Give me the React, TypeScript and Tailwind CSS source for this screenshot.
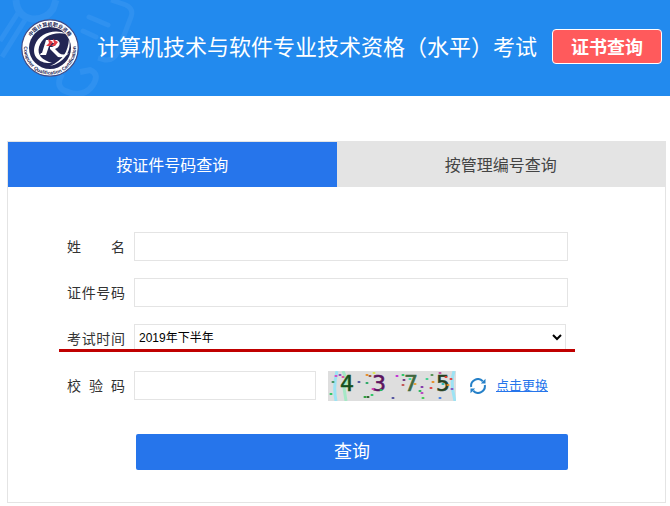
import { useState } from "react";

const specks: [number, number, string][] = [
  [8, 5, "#d946c4"], [12, 4, "#7c4fc0"], [15, 6, "#e0529c"], [5, 11, "#3f8f5b"], [3, 23, "#22c55e"],
  [31, 11, "#4b4b9b"], [39, 4, "#e8891c"], [42, 5, "#a0522d"], [46, 2, "#d9e84a"],
  [39, 12, "#22a55e"], [37, 26, "#1f9d2f"], [40, 26, "#245c24"], [44, 24, "#22c55e"], [45, 18, "#d63ab0"],
  [53, 19, "#22c55e"], [69, 5, "#c026d3"], [75, 4, "#22c55e"], [76, 9, "#6b2a7a"], [75, 14, "#c04a4a"],
  [82, 8, "#35e0a0"], [87, 13, "#e89a2c"], [94, 16, "#7c2da8"], [92, 20, "#22b455"], [94, 22, "#b63ac0"],
  [99, 8, "#35d08a"], [103, 17, "#e03a3a"], [105, 11, "#e8891c"], [104, 4, "#4b8f4b"], [112, 2, "#c04a9c"],
  [118, 6, "#e03a2a"], [123, 8, "#e03a3a"], [115, 13, "#22b4b4"], [120, 14, "#e8891c"], [124, 18, "#7c4fc0"],
  [95, 27, "#3acb50"], [112, 27, "#3f7be0"], [65, 27, "#4b4b9b"],
];

function HeaderPattern() {
  return (
    <svg className="absolute left-0 top-0" width="160" height="96" viewBox="0 0 160 96" fill="none" stroke="#2f91f0" strokeWidth="5" aria-hidden="true">
      <path d="M16 0Q17 16 32 19 46 20 53 9L56 0" strokeWidth="7" />
      <path d="M18 13 0 41M25 20 2 57" />
      <path d="M111 0 126 5Q134 9 131 17L118 51Q114 61 105 60L98 58" />
      <path d="M89 17 108 25M83 31 96 37" strokeLinecap="round" />
      <path d="M62 74Q54 88 68 92 84 98 93 85 100 74 90 70L80 72" strokeWidth="6" />
    </svg>
  );
}

function Logo() {
  return (
    <svg className="shrink-0" width="58" height="58" viewBox="0 0 58 58" role="img" aria-label="计算机职业资格">
      <defs>
        <path id="arc-top" d="M7 29A22 22 0 0 1 51 29" />
        <path id="arc-bottom" d="M3.6 24A26 26 0 1 0 54.4 24" />
      </defs>
      <circle cx="29" cy="29" r="28.2" fill="#fff" stroke="#3f4a86" strokeWidth="1.2" />
      <circle cx="29" cy="29" r="21" fill="#232654" />
      <text fontSize="5" fontWeight="700" fill="#232654" fontFamily="'Noto Sans CJK SC', sans-serif">
        <textPath href="#arc-top" startOffset="50%" textAnchor="middle">中国计算机职业资格</textPath>
      </text>
      <text fontSize="5" fontWeight="700" fill="#232654" fontFamily="'Liberation Sans', sans-serif">
        <textPath href="#arc-bottom" startOffset="50%" textAnchor="middle">Computer Qualification Certification</textPath>
      </text>
      <path d="M46 15C34 9 18 14 14 26 10 38 19 45 31 44 21 41 16 36 18 28 21 17 33 12 46 15Z" fill="#fff" />
      <path d="M48 20C51 31 44 44 29 47 42 41 47 33 48 20Z" fill="#fff" />
      <path d="M25 21H36Q40 23 38 27 37 29 34 30L38 34Q42 37 48 34 44 39 37 38L29 30V28H31Q34 27 34 24H29L25 36H19L20 34H21Z" fill="#fff" />
      <path d="M27 20 32 23 29 27 25 27 28 24ZM32 20 37 23 34 27 30 27 33 24Z" fill="#e23b45" />
    </svg>
  );
}

function Captcha() {
  return (
    <svg className="shrink-0" width="128" height="30" viewBox="0 0 128 30" role="img" aria-label="校验码图片">
      <rect width="128" height="30" fill="#dedede" />
      <path d="M9 0Q5 15 8 30M126 0Q122 12 127 30" stroke="#9ce3f4" strokeWidth="3" fill="none" />
      <path d="M15 0 19 10 16 17 18 30" stroke="#a5e8c5" strokeWidth="3" fill="none" />
      <g fontFamily="'DejaVu Sans', sans-serif" fontSize="22" strokeWidth="0.6">
        <text x="12" y="20" fill="#17501c" stroke="#17501c">4</text>
        <text x="44" y="20" fill="#5c1460" stroke="#5c1460">3</text>
        <text x="76" y="20" fill="#41683f" stroke="#41683f">7</text>
        <text x="108" y="20" fill="#26401f" stroke="#26401f">5</text>
      </g>
      {specks.map(([x, y, c], i) => (
        <ellipse key={i} cx={x} cy={y} rx="1.6" ry="1.1" fill={c} />
      ))}
    </svg>
  );
}

function RefreshIcon() {
  return (
    <svg width="16" height="16" viewBox="0 0 16 16" fill="none" stroke="#2580c8" strokeWidth="2" aria-hidden="true">
      <path d="M1.2 9A6.8 6.8 0 0 1 12.8 3.2M14.8 7A6.8 6.8 0 0 1 3.2 12.8" />
      <path d="M15.5.8V5.5H10.8ZM.5 15.2V10.5H5.2Z" fill="#2580c8" stroke="none" />
    </svg>
  );
}

const labelClass = "w-[58px] shrink-0 text-sm text-[#333333] [text-align-last:justify]";
const inputClass = "h-[29px] min-w-0 border border-[#e4e4e4] bg-white px-2 text-sm outline-none";

export default function App() {
  const [tab, setTab] = useState(0);
  return (
    <div className="bg-white font-['Liberation_Sans','Noto_Sans_CJK_SC',sans-serif]">
      <header className="relative flex h-24 items-center bg-[#228aee] pl-[21px] pr-2">
        <HeaderPattern />
        <div className="relative flex w-full items-center">
          <Logo />
          <h1 className="ml-[18px] flex-1 whitespace-nowrap text-[22px] leading-8 text-white">
            计算机技术与软件专业技术资格（水平）考试
          </h1>
          <button type="button" className="mb-1 h-[35px] w-[110px] shrink-0 rounded border border-white bg-[#ff5a5c] pt-0.5 text-lg leading-8 font-bold text-white">
            证书查询
          </button>
        </div>
      </header>

      <main className="mt-[45px] mr-1 mb-1 ml-[7px] border border-[#e4e4e4]">
        <div className="flex" role="tablist">
          {["按证件号码查询", "按管理编号查询"].map((name, i) => (
            <button
              key={name}
              type="button"
              role="tab"
              aria-selected={tab === i}
              onClick={() => setTab(i)}
              className={`h-[45px] flex-1 pt-0.5 text-base ${tab === i ? "bg-[#2675eb] text-white" : "bg-[#e4e4e4] text-[#444444]"}`}
            >
              {name}
            </button>
          ))}
        </div>

        <form className="pt-[45px] pr-[97px] pb-8 pl-[59px]" onSubmit={(e) => e.preventDefault()}>
          <div className="flex flex-col gap-[17px]">
            <div className="flex items-center gap-[9px]">
              <label htmlFor="name" className={labelClass}>姓 名</label>
              <input id="name" type="text" className={`${inputClass} flex-1`} />
            </div>
            <div className="flex items-center gap-[9px]">
              <label htmlFor="idno" className={labelClass}>证件号码</label>
              <input id="idno" type="text" className={`${inputClass} flex-1`} />
            </div>
            <div className="relative flex h-[30px] items-center gap-[9px]">
              <label htmlFor="time" className={labelClass}>考试时间</label>
              <select id="time" className="mr-[2px] h-[27px] flex-1 self-start border border-[#e4e4e4] bg-white text-xs text-black outline-none">
                <option>2019年下半年</option>
              </select>
              <div className="absolute -right-[7px] -left-2 top-[25px] h-[3px] bg-[#c00000]" />
            </div>
            <div className="flex items-center gap-[9px]">
              <label htmlFor="code" className={labelClass}>校 验 码</label>
              <div className="flex flex-1 items-center gap-3">
                <input id="code" type="text" className={`${inputClass} w-[182px] self-start`} />
                <Captcha />
                <a href="#" className="ml-[2px] flex items-center gap-[10px] whitespace-nowrap text-[13px] text-[#2675eb]">
                  <RefreshIcon />
                  <span className="underline">点击更换</span>
                </a>
              </div>
            </div>
          </div>
          <div className="mt-[33px] pl-[69px]">
            <button type="submit" className="h-9 w-full rounded-[2px] bg-[#2675eb] text-lg text-white">
              查询
            </button>
          </div>
        </form>
      </main>
    </div>
  );
}
